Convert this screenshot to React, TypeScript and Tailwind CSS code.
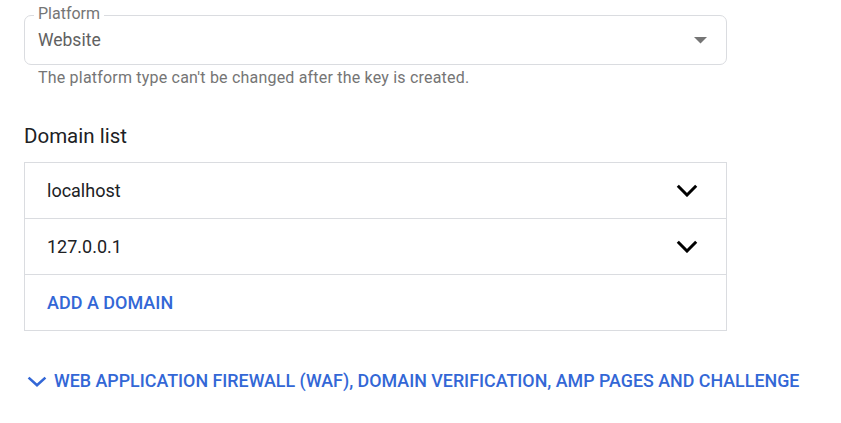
const domains = ['localhost', '127.0.0.1'];

function Chevron({ className, width, height, stroke }: { className: string; width: number; height: number; stroke: number }) {
  const s = stroke / 2 + 0.3;
  return (
    <svg width={width} height={height} viewBox={`0 0 ${width} ${height}`} className={className}>
      <polyline
        points={`${s},${s} ${width / 2},${height - s - 0.2} ${width - s},${s}`}
        fill="none"
        stroke="currentColor"
        strokeWidth={stroke}
        strokeLinejoin="miter"
      />
    </svg>
  );
}

export default function App() {
  return (
    <div className="min-h-screen bg-white pl-6 pt-[15px] font-['Roboto',sans-serif]" style={{ width: 841 }}>
      <div className="w-[703px]">
        {/* Platform select */}
        <div className="relative flex h-[50px] items-center rounded-[7px] border border-[#dadce0] pl-[13px] pr-[19px]">
          <span className="absolute -top-[12px] left-[9px] bg-white px-[4px] text-[16px] leading-5 text-[#757575]">
            Platform
          </span>
          <span className="flex-1 pt-[1px] text-[17.5px] text-[#616161]">Website</span>
          <svg width="13" height="7" viewBox="0 0 13 7" className="mt-[1px]">
            <path d="M0 0h13L6.5 6.5z" fill="#757575" />
          </svg>
        </div>
        <p className="mt-[3px] pl-[14px] text-[16px] leading-5 tracking-[0.2px] text-[#757575]">
          The platform type can't be changed after the key is created.
        </p>

        {/* Domain list */}
        <h2 className="mt-[36px] text-[20.5px] leading-6 text-[#202124]">Domain list</h2>
        <div className="mt-[14px] border border-[#dadce0]">
          {domains.map((d) => (
            <div key={d} className="flex h-[56px] items-center border-b border-[#dadce0] pl-[22px] pr-[28px]">
              <span className="flex-1 text-[18px] text-[#202124]">{d}</span>
              <Chevron width={22} height={13} stroke={3} className="shrink-0 text-black" />
            </div>
          ))}
          <div className="flex h-[55px] items-center pl-[22px]">
            <span className="text-[18px] font-medium text-[#3367d6]">ADD A DOMAIN</span>
          </div>
        </div>
      </div>

      {/* Advanced */}
      <div className="mt-[37px] flex items-center gap-[7px] pl-[3px]">
        <Chevron width={20} height={11} stroke={2.6} className="shrink-0 text-[#3367d6]" />
        <span className="whitespace-nowrap text-[17.85px] font-medium text-[#3367d6]">
          WEB APPLICATION FIREWALL (WAF), DOMAIN VERIFICATION, AMP PAGES AND CHALLENGE
        </span>
      </div>
    </div>
  );
}
